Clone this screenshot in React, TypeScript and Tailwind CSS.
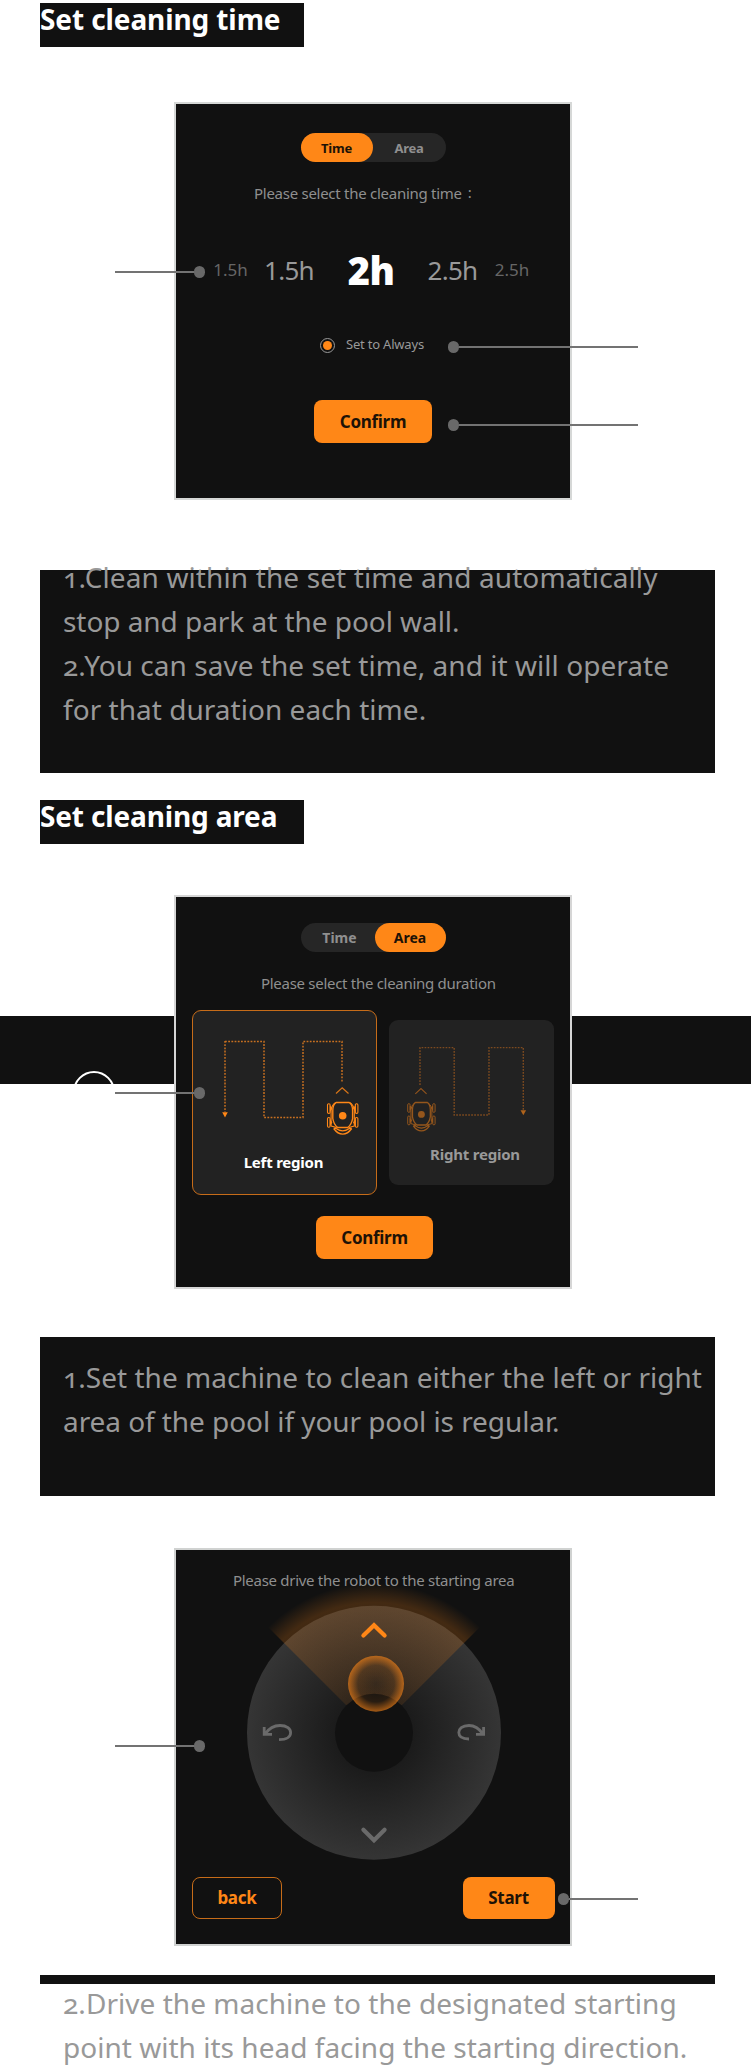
import React from "react";

function Callout({ side, className }: { side: "left" | "right"; className: string }) {
  return (
    <div className={"absolute flex h-3 items-center " + (side === "left" ? "flex-row " : "flex-row-reverse ") + className}>
      <div className="h-[2.5px] grow bg-[#737373]" />
      <div className="h-3 w-[11px] shrink-0 rounded-full bg-[#696969]" />
    </div>
  );
}

function Heading({ children, className }: { children: React.ReactNode; className: string }) {
  return (
    <h2 className="ml-10 h-11 w-[264px] bg-[#111] text-[28px] leading-[32px] font-bold text-white">
      <span className={"whitespace-nowrap " + className}>{children}</span>
    </h2>
  );
}

function Line({ children, className }: { children: React.ReactNode; className: string }) {
  return (
    <p className="h-11 leading-[44px]">
      <span className={"whitespace-nowrap " + className}>{children}</span>
    </p>
  );
}

function Robot() {
  return (
    <g fill="none" stroke="#ff8717" strokeWidth="1.1">
      <rect x="-15.2" y="2.3" width="2.6" height="9.6" rx="1.2" />
      <rect x="12.6" y="2.3" width="2.6" height="9.6" rx="1.2" />
      <rect x="-15.2" y="16" width="2.6" height="9.8" rx="1.2" />
      <rect x="12.6" y="16" width="2.6" height="9.8" rx="1.2" />
      <path d="M-6.5 1H6.5Q9.8 3 9.9 9V17Q9 23 5 26H-5Q-9 23-9.9 17V9Q-9.8 3-6.5 1Z" strokeWidth="1.4" />
      <path d="M-7 1Q-10.5 3-11.6 8V24.5L-6 26M7 1Q10.5 3 11.6 8V24.5L6 26" />
      <path d="M-12.4 5V9L-11 7ZM12.4 5V9L11 7ZM-12.4 19V23L-11 21ZM12.4 19V23L11 21Z" fill="#ff8717" />
      <path d="M-9 27Q-5 32.6 0 32.6T9 27M-7 26.8Q0 32 7 26.8M-9 27L-6 26.4M9 27L6 26.4" strokeWidth="1.4" />
      <circle cy="14.2" r="3.8" fill="#ff8717" stroke="none" />
    </g>
  );
}

function RouteLeft() {
  return (
    <svg className="block h-[110px] w-[183px] overflow-visible" viewBox="0 0 183 110">
      <path d="M32 30V101M32 30.5H71V106.5H110V30.5H149V72" fill="none" stroke="#c87020" strokeWidth="1.5" strokeDasharray="1.8 1.4" />
      <path d="M29.2 101.3H34.8L32 106.5Z" fill="#ff8717" />
      <path d="M143 82.5L149.2 76.8L155.5 82.5" fill="none" stroke="#d97518" strokeWidth="1.2" />
      <g transform="translate(149.7 90.5)"><Robot /></g>
    </svg>
  );
}

function RouteRight() {
  return (
    <svg className="block h-[110px] w-[165px] overflow-visible" viewBox="0 0 165 110">
      <path d="M31 65V27.6H65.2V95H100V27.6H134.3V91" fill="none" stroke="#7d4a1f" strokeWidth="1.4" strokeDasharray="1.7 1.3" />
      <path d="M131.5 90.3H137.1L134.3 95.2Z" fill="#b0641c" />
      <path d="M26.3 73.8L32 68.5L37.6 73.8" fill="none" stroke="#91531c" strokeWidth="1.1" />
      <g transform="translate(32.4 81.6) scale(.9)" opacity=".52"><Robot /></g>
    </svg>
  );
}

function DriveDial() {
  return (
    <svg className="block h-[274px] w-[394px] overflow-visible" viewBox="176 1588 394 274">
      <defs>
        <radialGradient id="disc" gradientUnits="userSpaceOnUse" cx="374" cy="1733" r="127">
          <stop offset=".3" stopColor="#1b1b1b" />
          <stop offset="1" stopColor="#353535" />
        </radialGradient>
        <radialGradient id="beam" gradientUnits="userSpaceOnUse" cx="374" cy="1733" r="150">
          <stop offset=".27" stopColor="#ff8717" stopOpacity=".1" />
          <stop offset=".87" stopColor="#ff8717" stopOpacity=".21" />
          <stop offset="1" stopColor="#ff8717" stopOpacity="0" />
        </radialGradient>
        <radialGradient id="knob">
          <stop offset="0" stopColor="#ff8717" stopOpacity="0" />
          <stop offset=".65" stopColor="#ff8717" stopOpacity=".1" />
          <stop offset="1" stopColor="#ff8717" stopOpacity=".62" />
        </radialGradient>
      </defs>
      <circle cx="374" cy="1732.8" r="127" fill="url(#disc)" />
      <path d="M374 1733L268 1627A150 150 0 0 1 480 1627Z" fill="url(#beam)" />
      <circle cx="374" cy="1732.8" r="39" fill="#111" />
      <circle cx="376" cy="1683.7" r="28" fill="url(#knob)" />
      <g fill="none" strokeWidth="4.2" strokeLinecap="round" strokeLinejoin="miter">
        <path d="M363.4 1635.6L374 1625.2L384.6 1635.6" stroke="#ff8717" />
        <path d="M363.4 1829.8L374 1840.2L384.6 1829.8" stroke="#6a6a6a" />
      </g>
      <g fill="none" stroke="#6a6a6a" strokeWidth="2.8">
        <path d="M264.2 1727V1734.3H272M265 1734Q271 1725.5 280 1725.5C287 1725.5 290.6 1729 290.6 1732.7C290.6 1736.5 287 1739.6 279 1739.6" />
        <path d="M483.6 1727V1734.3H476M483 1734Q477 1725.5 469 1725.5C462 1725.5 458.8 1729 458.8 1732.6C458.8 1736.2 462 1739 469 1739" />
      </g>
    </svg>
  );
}

export default function App() {
  return (
    <div className="relative h-[2067px] w-[751px] overflow-hidden bg-white pt-[3px] font-['Noto_Sans',sans-serif]">
      <Heading className="tracking-[-0.1px]">Set cleaning time</Heading>

      <section className="relative mt-[55px]">
        <div className="ml-[174px] h-[398px] w-[398px] border-2 border-[#d6d8d7] bg-[#111]">
          <div className="mx-auto mt-[29px] flex h-[29px] w-[145px] rounded-full bg-[#262626] text-[13px] font-bold tracking-[-0.25px]">
            <div className="flex w-[72px] items-center justify-center rounded-full bg-[#ff8717] pt-[2px] text-[#1d1206]">Time</div>
            <div className="flex grow items-center justify-center pt-[2px] text-[#8f8f8f]">Area</div>
          </div>
          <div className="mt-[21px] ml-[78px] flex h-5 items-center gap-[6px] text-[15px] text-[#8f8f8f]">
            <span className="tracking-[-0.27px] whitespace-nowrap">Please select the cleaning time</span>
            <span className="relative -top-px">:</span>
          </div>
          <div className="mt-[45px] ml-6 flex h-11 items-center text-center whitespace-nowrap">
            <div className="w-[60px] pl-px text-[17px] text-[#666]">1.5h</div>
            <div className="w-[58px] text-[26px] tracking-[-0.7px] text-[#999]">1.5h</div>
            <div className="w-[106px] text-[38px] font-black tracking-[-0.5px] text-white">2h</div>
            <div className="w-[57px] text-[26px] tracking-[-0.7px] text-[#999]">2.5h</div>
            <div className="w-[62px] text-[17px] text-[#666]">2.5h</div>
          </div>
          <div className="mt-[43px] ml-36 flex h-5 items-center gap-[11px] text-[13px] text-[#999]">
            <div className="flex size-[15px] items-center justify-center rounded-full border border-[#999]">
              <div className="size-[9px] rounded-full bg-[#ff8717]" />
            </div>
            <span className="tracking-[-0.2px] whitespace-nowrap">Set to Always</span>
          </div>
          <div className="mt-[45px] ml-[138px] flex h-[43px] w-[118px] items-center justify-center rounded-[8px] bg-[#ff8717] text-[17px] font-bold tracking-[-0.3px] text-[#1d1206]">Confirm</div>
        </div>
        <Callout side="left" className="top-[164px] left-[115px] w-[90px]" />
        <Callout side="right" className="top-[239px] left-[448px] w-[190px]" />
        <Callout side="right" className="top-[317px] left-[448px] w-[190px]" />
      </section>

      <div className="mt-[70px] ml-10 flow-root h-[203px] w-[675px] bg-[#111] pl-[23px] text-[28px] text-[#999] oldstyle-nums">
        <div className="-mt-[15px]">
          <Line className="tracking-[0.12px]">1.Clean within the set time and automatically</Line>
          <Line className="tracking-[-0.05px]">stop and park at the pool wall.</Line>
          <Line className="tracking-[0.04px]">2.You can save the set time, and it will operate</Line>
          <Line className="tracking-[0.03px]">for that duration each time.</Line>
        </div>
      </div>

      <div className="mt-[27px]"><Heading className="tracking-[-0.15px]">Set cleaning area</Heading></div>

      <section className="relative mt-[51px]">
        <div className="absolute top-[121px] left-0 h-[68px] w-full overflow-hidden bg-[#111]">
          <div className="mt-[55px] ml-[73px] size-[42px] rounded-full border-2 border-white" />
        </div>
        <div className="relative ml-[174px] h-[394px] w-[398px] border-2 border-[#d6d6d6] bg-[#111]">
          <div className="mx-auto mt-[26px] flex h-[29px] w-[145px] rounded-full bg-[#262626] text-[14px] font-bold">
            <div className="flex grow items-center justify-center pl-1 text-[#8f8f8f]">Time</div>
            <div className="flex w-[71px] items-center justify-center rounded-full bg-[#ff8717] text-[#1d1206]">Area</div>
          </div>
          <div className="mt-[21px] ml-[85px] flex h-5 items-center text-[15px] text-[#8f8f8f]">
            <span className="tracking-[-0.29px] whitespace-nowrap">Please select the cleaning duration</span>
          </div>
          <div className="mt-[17px] flex items-center gap-3 pl-4 text-center text-[15px] font-bold tracking-[-0.22px]">
            <div className="h-[185px] w-[185px] rounded-[9px] border border-[#c66c19] bg-[#222]">
              <RouteLeft />
              <p className="mt-[30px] -translate-x-px text-white">Left region</p>
            </div>
            <div className="h-[165px] w-[165px] rounded-[9px] bg-[#222]">
              <RouteRight />
              <p className="mt-[13px] pl-[7px] text-[#999]">Right region</p>
            </div>
          </div>
          <div className="mt-[21px] ml-[140px] flex h-[43px] w-[117px] items-center justify-center rounded-[8px] bg-[#ff8717] text-[17px] font-bold tracking-[-0.3px] text-[#1d1206]">Confirm</div>
        </div>
        <Callout side="left" className="top-[192px] left-[115px] w-[90px]" />
      </section>

      <div className="mt-12 ml-10 h-[159px] w-[675px] bg-[#111] pt-[18px] pl-[23px] text-[28px] text-[#999] oldstyle-nums">
        <Line className="tracking-[0.02px]">1.Set the machine to clean either the left or right</Line>
        <Line className="tracking-[-0.07px]">area of the pool if your pool is regular.</Line>
      </div>

      <section className="relative mt-[52px]">
        <div className="ml-[174px] h-[398px] w-[398px] border-2 border-[#d0d2d1] bg-[#111] pt-5">
          <div className="ml-[57px] flex h-5 items-center text-[15px] text-[#8f8f8f]">
            <span className="tracking-[-0.29px] whitespace-nowrap">Please drive the robot to the starting area</span>
          </div>
          <div className="-mt-[2px]"><DriveDial /></div>
          <div className="mt-[15px] flex justify-between pr-[15px] pl-4 text-[17px] font-bold tracking-[-0.25px]">
            <div className="flex h-[42px] w-[90px] items-center justify-center rounded-[8px] border border-[#c66c19] text-[#ff8717]">back</div>
            <div className="flex h-[42px] w-[92px] items-center justify-center rounded-[8px] bg-[#ff8717] pr-px text-[#1d1206]">Start</div>
          </div>
        </div>
        <Callout side="left" className="top-[192px] left-[115px] w-[90px]" />
        <Callout side="right" className="top-[345px] left-[558px] w-[80px]" />
      </section>

      <div className="mt-[29px] ml-10 h-[9px] w-[675px] bg-[#111]" />
      <div className="-mt-[3px] ml-[63px] text-[28px] text-[#999] oldstyle-nums">
        <Line className="tracking-[0.04px]">2.Drive the machine to the designated starting</Line>
        <Line className="tracking-[0.02px]">point with its head facing the starting direction.</Line>
      </div>
    </div>
  );
}
